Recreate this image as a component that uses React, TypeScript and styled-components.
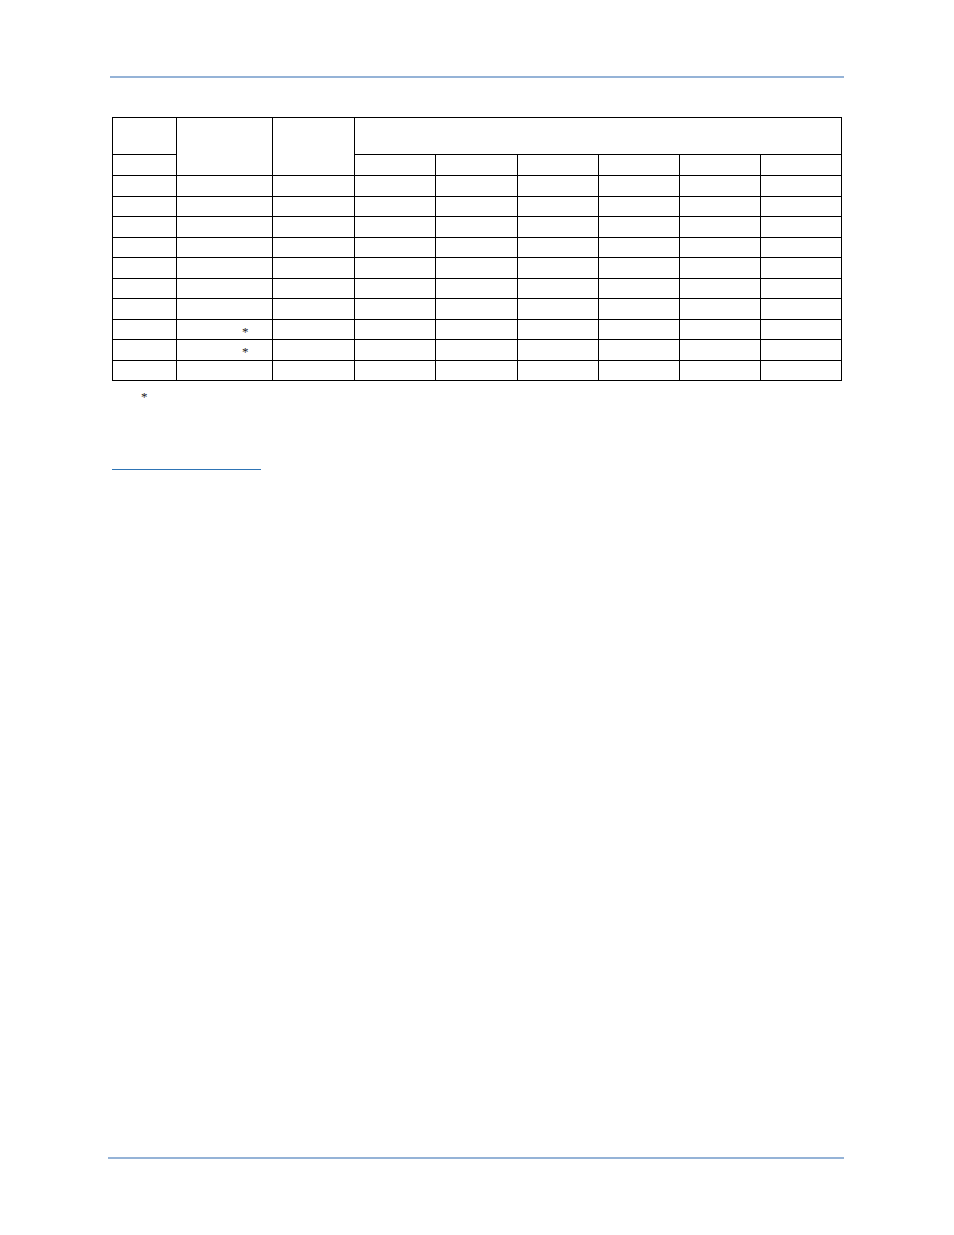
import * as React from "react";
import styled, { createGlobalStyle } from "styled-components";

const GlobalStyle = createGlobalStyle`
  html, body {
    margin: 0;
    padding: 0;
    background: #ffffff;
  }
  body {
    font-family: "Liberation Serif", "Times New Roman", serif;
    color: #000;
  }
`;

const Page = styled.div`
  width: 954px;
  height: 1235px;
  box-sizing: border-box;
  padding: 76px 110px 76px 108px;
  display: flex;
  flex-direction: column;
`;

const Rule = styled.div<{ $inset?: number }>`
  height: 2px;
  background: #95b3d7;
  margin-left: ${(p) => p.$inset ?? 0}px;
`;

const Grid = styled.table`
  border-collapse: collapse;
  margin: 39px 0 0 4px;
  table-layout: fixed;
  width: 730px;
`;

const Cell = styled.td<{ $h?: number }>`
  border: 1px solid #000;
  padding: 0;
  height: ${(p) => (p.$h ? `${p.$h}px` : "auto")};
  font-size: 10px;
  line-height: 1;
  vertical-align: top;
`;

const Star = styled.span`
  display: inline-block;
  margin: 5px 0 0 65px;
  font-size: 13px;
  line-height: 1;
  color: #222;
`;

const Footnote = styled.div`
  margin: 9px 0 0 33px;
  font-size: 13px;
  line-height: 14px;
  height: 14px;
  color: #222;
`;

const LinkLine = styled.div`
  margin: 65px 0 0 4px;
  width: 149px;
  border-bottom: 1px solid #2e74b5;
`;

const Spacer = styled.div`
  flex: 1;
`;

const widths = [64, 96, 82, 81, 82, 81, 81, 81, 81];
const bodyRows = 10;

export default function App() {
  return (
    <>
      <GlobalStyle />
      <Page>
        <Rule $inset={2} />
        <Grid>
          <colgroup>
            {widths.map((w, i) => (
              <col key={i} style={{ width: w }} />
            ))}
          </colgroup>
          <tbody>
            <tr>
              <Cell $h={36} />
              <Cell rowSpan={2} />
              <Cell rowSpan={2} />
              <Cell colSpan={6} />
            </tr>
            <tr>
              <Cell $h={20} />
              {Array.from({ length: 6 }).map((_, i) => (
                <Cell key={i} />
              ))}
            </tr>
            {Array.from({ length: bodyRows }).map((_, r) => (
              <tr key={r}>
                {widths.map((_, c) => (
                  <Cell key={c} $h={19.5}>
                    {c === 1 && (r === 7 || r === 8) ? <Star>*</Star> : null}
                  </Cell>
                ))}
              </tr>
            ))}
          </tbody>
        </Grid>
        <Footnote>*</Footnote>
        <LinkLine />
        <Spacer />
        <Rule />
      </Page>
    </>
  );
}
